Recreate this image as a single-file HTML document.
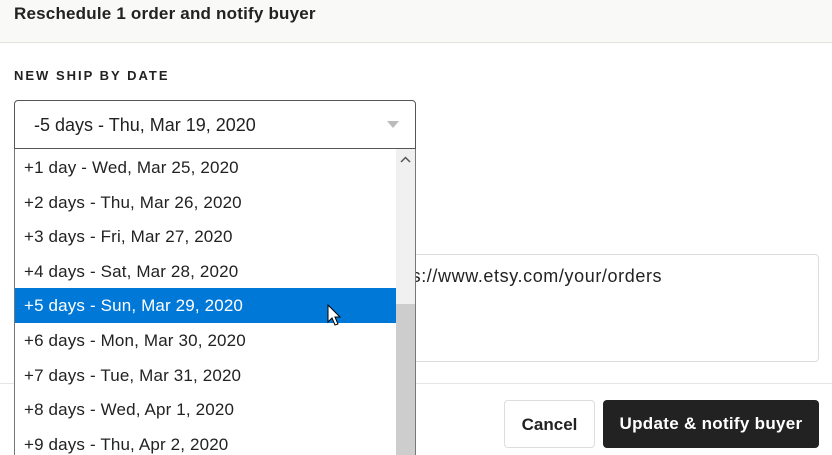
<!DOCTYPE html>
<html><head><style>
*{margin:0;padding:0;box-sizing:border-box}
body{width:832px;height:455px;overflow:hidden;background:#fff;font-family:"Liberation Sans",sans-serif;color:#222;position:relative}
.hdr{position:absolute;left:0;top:0;width:832px;height:43px;background:#f9f9f8;border-bottom:1px solid #e3e3e0}
.hdr span{position:absolute;left:14px;top:4px;font-size:17px;font-weight:bold;letter-spacing:0.2px;color:#222}
.lbl{position:absolute;left:14px;top:68px;font-size:13px;font-weight:bold;letter-spacing:2px;color:#222}
.sel{position:absolute;left:14px;top:100px;width:402px;height:49px;border:1px solid #555;border-radius:4px 4px 0 0;background:#fff}
.sel span{position:absolute;left:19px;top:14px;font-size:18px}
.arr{position:absolute;right:16px;top:20px;width:0;height:0;border-left:6px solid transparent;border-right:6px solid transparent;border-top:7px solid #bbb}
.ta{position:absolute;left:300px;top:254px;width:519px;height:108px;border:1px solid #ddd;border-radius:4px}
.ta span{position:absolute;left:100px;top:11px;font-size:18px;letter-spacing:0.6px}
.line{position:absolute;left:0;top:383px;width:832px;height:1px;background:#e6e6e6}
.btn{position:absolute;top:400px;height:48px;border-radius:4px;font-size:17px;font-weight:bold;text-align:center;line-height:48px}
.dd{position:absolute;left:14px;top:149px;width:402px;height:306px;border-left:1px solid #777;border-right:1px solid #777;background:#fff;overflow:hidden}
.rows{position:absolute;left:0;top:1px}
.row{height:34.6px;line-height:35.6px;padding-left:9px;font-size:17px;letter-spacing:0.15px;width:381px;color:#222}
.row.h{background:#0078d7;color:#fff}
.sb{position:absolute;right:0;top:0;width:19px;height:306px;background:#f0f0f0}
.th{position:absolute;right:0;top:155px;width:19px;height:151px;background:#cdcdcd}
</style></head><body>
<div class="hdr"><span>Reschedule 1 order and notify buyer</span></div>
<div class="lbl">NEW SHIP BY DATE</div>
<div class="ta"><span>ps://www.etsy.com/your/orders</span></div>
<div class="line"></div>
<div class="btn" style="left:504px;width:91px;border:1px solid #ddd;background:#fff;color:#222">Cancel</div>
<div class="btn" style="left:603px;width:216px;background:#222;color:#fff;letter-spacing:0.3px">Update &amp; notify buyer</div>
<div class="sel"><span>-5 days - Thu, Mar 19, 2020</span><div class="arr"></div></div>
<div class="dd">
<div class="rows">
<div class="row">+1 day - Wed, Mar 25, 2020</div>
<div class="row">+2 days - Thu, Mar 26, 2020</div>
<div class="row">+3 days - Fri, Mar 27, 2020</div>
<div class="row">+4 days - Sat, Mar 28, 2020</div>
<div class="row h">+5 days - Sun, Mar 29, 2020</div>
<div class="row">+6 days - Mon, Mar 30, 2020</div>
<div class="row">+7 days - Tue, Mar 31, 2020</div>
<div class="row">+8 days - Wed, Apr 1, 2020</div>
<div class="row">+9 days - Thu, Apr 2, 2020</div>
</div>
<div class="sb"><svg width="19" height="14" style="position:absolute;top:3px;left:0"><path d="M5 10 L9.5 5.5 L14 10" stroke="#555" stroke-width="1.5" fill="none"/></svg></div>
<div class="th"></div>
</div>
<svg style="position:absolute;left:327px;top:304px" width="16" height="24"><path d="M1 1 L1 18 L5 14 L8 21 L11 20 L8 13 L13 13 Z" fill="#fff" stroke="#000" stroke-width="1"/></svg>
</body></html>
